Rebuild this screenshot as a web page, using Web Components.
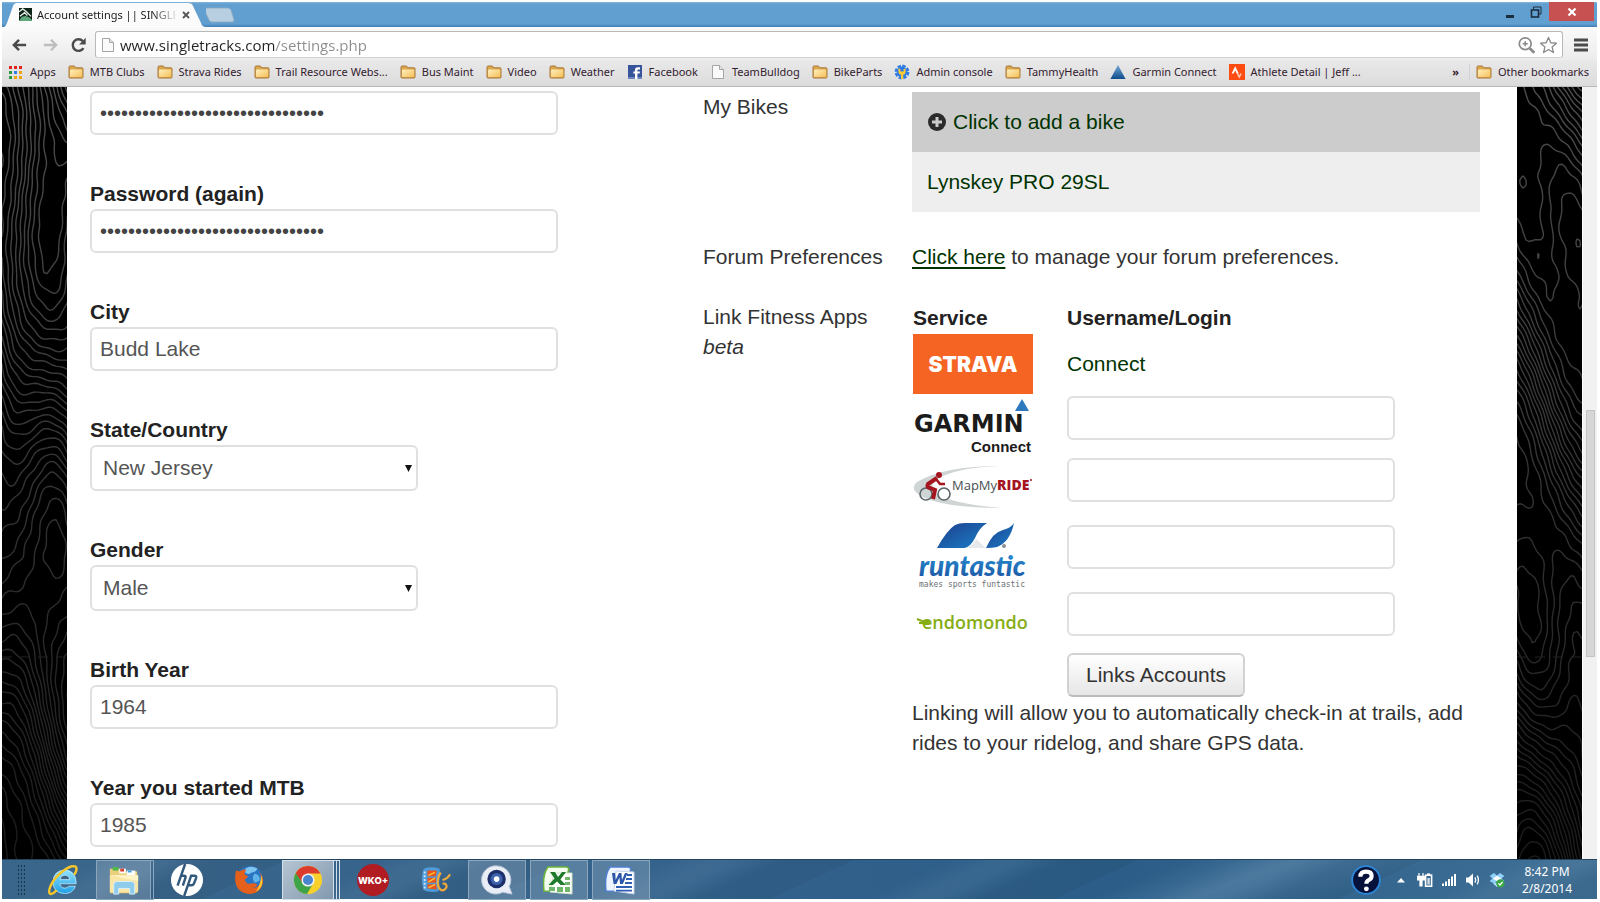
<!DOCTYPE html>
<html lang="en">
<head>
<meta charset="utf-8">
<title>Account settings || SINGLETRACKS</title>
<style>
    body {
        margin: 0;
        background: #fff;
        font-family: "Liberation Sans", Arial, sans-serif;
    }
</style>
</head>
<body>
<browser-window>
    <tab-strip slot="chrome" label="Account settings || SINGLE"></tab-strip>
    <address-bar slot="chrome" url="www.singletracks.com/settings.php"></address-bar>
    <bookmark-bar slot="chrome">
        <bookmark-item icon="apps">Apps</bookmark-item>
        <bookmark-item icon="folder">MTB Clubs</bookmark-item>
        <bookmark-item icon="folder">Strava Rides</bookmark-item>
        <bookmark-item icon="folder">Trail Resource Webs...</bookmark-item>
        <bookmark-item icon="folder">Bus Maint</bookmark-item>
        <bookmark-item icon="folder">Video</bookmark-item>
        <bookmark-item icon="folder">Weather</bookmark-item>
        <bookmark-item icon="facebook">Facebook</bookmark-item>
        <bookmark-item icon="page">TeamBulldog</bookmark-item>
        <bookmark-item icon="folder">BikeParts</bookmark-item>
        <bookmark-item icon="admin">Admin console</bookmark-item>
        <bookmark-item icon="folder">TammyHealth</bookmark-item>
        <bookmark-item icon="triangle">Garmin Connect</bookmark-item>
        <bookmark-item icon="strava">Athlete Detail | Jeff ...</bookmark-item>
        <bookmark-item slot="other" icon="folder">Other bookmarks</bookmark-item>
    </bookmark-bar>

    <settings-page>
        <form-field label="Password" type="password" value="aaaaaaaaaaaaaaaaaaaaaaaaaaaaaaaa" no-label></form-field>
        <form-field label="Password (again)" type="password" value="aaaaaaaaaaaaaaaaaaaaaaaaaaaaaaaa"></form-field>
        <form-field label="City" value="Budd Lake"></form-field>
        <select-field label="State/Country" value="New Jersey"></select-field>
        <select-field label="Gender" value="Male"></select-field>
        <form-field label="Birth Year" value="1964"></form-field>
        <form-field label="Year you started MTB" value="1985"></form-field>

        <setting-row slot="right">
            <span slot="name">My Bikes</span>
            <bike-list></bike-list>
        </setting-row>
        <setting-row slot="right">
            <span slot="name">Forum Preferences</span>
            <forum-link></forum-link>
        </setting-row>
        <setting-row slot="right">
            <span slot="name">Link Fitness Apps <em>beta</em></span>
            <fitness-apps></fitness-apps>
        </setting-row>
    </settings-page>

    <task-bar slot="taskbar">
        <task-item icon="ie" name="Internet Explorer"></task-item>
        <task-item icon="explorer" name="File Explorer" state="open" stack="1"></task-item>
        <task-item icon="hp" name="HP"></task-item>
        <task-item icon="firefox" name="Firefox"></task-item>
        <task-item icon="chrome" name="Chrome" state="active" stack="2"></task-item>
        <task-item icon="wko" name="WKO+"></task-item>
        <task-item icon="movie" name="Movies"></task-item>
        <task-item icon="quick" name="Q" state="open"></task-item>
        <task-item icon="excel" name="Excel" state="open"></task-item>
        <task-item icon="word" name="Word" state="open"></task-item>
    </task-bar>
</browser-window>

<script>
const UI_FONT = '"Noto Sans", "Open Sans", sans-serif';

// all icons: [viewBox, markup]
const ICONS = {
    apps: ['0 0 16 16', `
        <g fill="#e2231a"><rect x="1" y="2" width="3" height="3"/><rect x="6" y="2" width="3" height="3"/><rect x="11" y="2" width="3" height="3"/></g>
        <rect x="1" y="7" width="3" height="3" fill="#2c9a3f"/><rect x="6" y="7" width="3" height="3" fill="#2f7de1"/><rect x="11" y="7" width="3" height="3" fill="#f0a30a"/>
        <rect x="1" y="12" width="3" height="3" fill="#2c9a3f"/><rect x="6" y="12" width="3" height="3" fill="#f0a30a"/><rect x="11" y="12" width="3" height="3" fill="#f0a30a"/>`],
    folder: ['0 0 16 16', `
        <defs><linearGradient id="f" x1="0" y1="0" x2="1" y2="1"><stop offset="0" stop-color="#ffefc0"/><stop offset="1" stop-color="#f5c057"/></linearGradient></defs>
        <path d="M1 13V3.2Q1 2 2.2 2H6.4L7.8 3.8H14Q15 3.8 15 4.8V13Q15 14 14 14H2Q1 14 1 13Z" fill="#dba74c" stroke="#a9763b"/>
        <path d="M2 13V6.2Q2 5.4 2.8 5.4H13.4Q14.2 5.4 14.2 6.2V13Z" fill="url(#f)"/>`],
    facebook: ['0 0 16 16', `
        <rect x="1" y="1" width="14" height="14" fill="#37539a"/><rect x="1" y="13" width="14" height="2" fill="#6c86bd"/>
        <path d="M8 15V9.6H6.3V7.5H8V6Q8 3.2 10.8 3.2H13V5.4H11.4Q10.4 5.4 10.4 6.3V7.5H13L12.6 9.6H10.4V15Z" fill="#fff"/>`],
    page: ['0 0 16 16', `
        <path d="M2.5 1.5H9.5L13.5 5.5V14.5H2.5Z" fill="#fafafa" stroke="#a5a5a5"/><path d="M9.5 1.5V5.5H13.5" fill="#e6e6e6" stroke="#a5a5a5"/>`],
    admin: ['0 0 16 16', `
        <circle cx="8" cy="8" r="5.4" fill="#2e7be4"/><circle cx="8" cy="8" r="6.2" fill="none" stroke="#2e7be4" stroke-width="2.4" stroke-dasharray="3.4 1.4"/>
        <path d="M4.4 4.4V8Q4.6 10.4 7 10.8V15H9.2V10.8Q11.4 10.4 11.6 8V4.4L9.6 5V7.6H6.4V5Z" fill="#ffc933"/>`],
    triangle: ['0 0 16 16', `
        <defs><linearGradient id="t" x1="0" y1="0" x2="0" y2="1"><stop offset="0" stop-color="#74a6d4"/><stop offset="1" stop-color="#0d4c8c"/></linearGradient></defs>
        <path d="M8 1L15.6 15H.4Z" fill="url(#t)"/>`],
    strava: ['0 0 16 16', `
        <rect width="16" height="16" fill="#fc4c12"/><path d="M2.6 9.4L6.2 2.2L9.8 9.4H7.7L6.2 6.5L4.7 9.4Z" fill="#fff"/>
        <path d="M7.6 9.6H9.3L10.2 11.4L11.2 9.6H12.9L10.2 14.8Z" fill="#ffc9b2"/>`],
    favicon: ['0 0 14 14', `
        <rect width="14" height="14" fill="#10251a"/><path d="M0 14L3 9.5L7 8.5L11 10L14 13V14Z" fill="#5fa77c"/>
        <path d="M0 4L4 1L8 4L13 9M1 9L6 5L9 8" stroke="#e7eee9" stroke-width="1.4" fill="none"/>`],
    back: ['0 0 18 16', `<path d="M16 8H3.5M8.5 2.5L3 8L8.5 13.5" fill="none" stroke="#4b4b4b" stroke-width="2.6"/>`],
    forward: ['0 0 18 16', `<path d="M2 8H14.5M9.5 2.5L15 8L9.5 13.5" fill="none" stroke="#bdbdbd" stroke-width="2.4"/>`],
    reload: ['0 0 16 16', `<path d="M13 11.2A5.8 5.8 0 1 1 12.4 4.2" fill="none" stroke="#4b4b4b" stroke-width="2.4"/><path d="M15.2 .8V7.4H8.6Z" fill="#4b4b4b"/>`],
    zoomglass: ['0 0 16 16', `
        <circle cx="6.8" cy="6.8" r="5.6" fill="none" stroke="#8a8a8a" stroke-width="1.6"/><path d="M11 11L15.4 15.4" stroke="#8a8a8a" stroke-width="2.6"/>
        <path d="M4.4 6.8H9.2M6.8 4.4V9.2" stroke="#8a8a8a" stroke-width="1.5"/>`],
    star: ['0 0 18 18', `<path d="M9 1L11.4 6.6L17.4 7.1L12.8 11L14.2 17L9 13.8L3.8 17L5.2 11L.6 7.1L6.6 6.6Z" fill="#fff" stroke="#8a8a8a" stroke-width="1.4" stroke-linejoin="round"/>`],
    menu: ['0 0 14 14', `<path d="M0 2H14M0 7H14M0 12H14" stroke="#4b4b4b" stroke-width="3"/>`],
    plus: ['0 0 18 18', `<circle cx="9" cy="9" r="9" fill="#2b2b2b"/><path d="M9 4V14M4 9H14" stroke="#ccc" stroke-width="3"/>`],

    ie: ['0 0 34 34', `
        <defs><linearGradient id="i" x1="0" y1="0" x2="0" y2="1"><stop offset="0" stop-color="#8fe3ff"/><stop offset="1" stop-color="#1f9fe6"/></linearGradient></defs>
        <path d="M31 21H13.8Q14.4 25.6 18.8 25.6Q22 25.6 23.2 23.6H30.2Q27.4 31.4 18.8 31.4Q6.6 31 6.4 19Q6.8 7 19 6.4Q31.2 7 31 21ZM14 16.6H24Q23.6 12 19 11.9Q14.8 12 14 16.6Z" fill="url(#i)" stroke="#d8f5ff" stroke-width=".7"/>
        <path d="M9.5 28.5C3 35 .2 31.4 4.2 22.4C9.6 12 23.4 .4 30 2.6C32.4 3.6 31.2 8 29.6 10.4" fill="none" stroke="#f6c62d" stroke-width="2.6" stroke-linecap="round"/>`],
    explorer: ['0 0 34 34', `
        <path d="M2 5H12L14 8H31V31H2Z" fill="#eccf7c"/><rect x="5" y="3" width="6" height="4" fill="#4fb84a"/><path d="M12 5H19V10H12Z" fill="#fff"/><path d="M13 5H17V8H13Z" fill="#d9402e"/>
        <path d="M20 7H29V12H20Z" fill="#fff"/><path d="M21 7H25V9H21Z" fill="#3f9ee0"/><path d="M2 12H32V30H2Z" fill="#f9e6a4"/><path d="M2 12L32 12L32 18Z" fill="#fff3c8"/>
        <path d="M6 32V22Q6 18.6 9.6 18.6H25Q28.4 18.6 28.4 22V32H23V26H11.4V32Z" fill="#8fcbea" stroke="#d7f0fb"/>`],
    hp: ['0 0 34 34', `
        <circle cx="17" cy="17" r="17" fill="#fff"/>
        <g fill="none" stroke="#31597c" stroke-width="2.6"><path d="M15 0L7 23M10.4 12.4H13.8Q16 12.4 15.4 14.6L12.6 23"/><path d="M14 34L21.4 12.4H24.8Q27.4 12.4 26.6 15L24.6 20.4Q23.8 22.6 21.6 22.6H18.2"/></g>`],
    firefox: ['0 0 34 34', `
        <circle cx="18" cy="15.4" r="13.4" fill="#2a74c4"/><path d="M13 5Q19 1 26 5Q24 9 20 9Q16 12 13 9Z" fill="#7dc4ef"/><path d="M23 10Q30 12 28 18L23 20Q19 15 23 10Z" fill="#5fb1e8"/>
        <path d="M3.4 6.4Q5 8.4 7.4 7.6Q10.6 5 14 6Q11.4 9 12.8 11.6Q16 12 16.2 13.6L12.6 16.6Q13.4 22 19 20.8Q23.6 19.6 25.8 22Q24 25.6 19.4 25.6Q29 26 30 16Q30.2 10.6 27.6 7.6Q33.4 13.6 31.4 21.6Q28 32 17.4 31.8Q3.6 30.6 2.4 17.4Q2 11.4 3.4 6.4Z" fill="#e4601b"/>
        <path d="M30 12Q34 24 24.4 29.4Q29.4 22 30 12Z" fill="#fbc934"/>`],
    chrome: ['0 0 34 34', `
        <circle cx="17" cy="17" r="15" fill="#f8d02c"/><path d="M17 17L4 9.5A15 15 0 0 0 16 32L22.6 20.4Z" fill="#3fa34a"/>
        <path d="M17 10H30.2A15 15 0 0 0 4 9.5L11 20Z" fill="#dd3b2b"/><circle cx="17" cy="17" r="7" fill="#f2f2f2"/><circle cx="17" cy="17" r="5.4" fill="#4a86d0"/>`],
    wko: ['0 0 34 34', `<circle cx="17" cy="17" r="17" fill="#b01c22"/><text x="17" y="21" text-anchor="middle" font-family="Inter, sans-serif" font-weight="800" font-size="10" fill="#fff">WKO+</text>`],
    movie: ['0 0 34 34', `
        <path d="M5 5Q13 2 22 5L21 29Q12 31 5 28Q1 16 5 5Z" fill="#4e9bdb"/><path d="M6 8V26" stroke="#cfe8fa" stroke-width="2" stroke-dasharray="2 2"/>
        <path d="M9 7H19L18 13H9ZM9 14.6H18V20H9ZM9 21.6H18L19 27L9 26Z" fill="#e8541a"/><path d="M10 12L17 9M10 19L17 15M10 25L17 22" stroke="#ffc23a" stroke-width="1.4"/>
        <path d="M23 9Q18 16 21 25Q25 31 29 25Q30 20 25 21M25 17Q30 16 33 11" fill="none" stroke="#f0a93a" stroke-width="2.4"/>`],
    quick: ['0 0 34 34', `
        <path d="M17 2A15 15 0 0 1 30 24L33 32L23 30A15 15 0 1 1 17 2Z" fill="#e9edf5" stroke="#b9c4d8"/><circle cx="16.6" cy="16" r="9.8" fill="#1c2f6b"/><circle cx="16.6" cy="16" r="6.4" fill="#3d63ad"/><circle cx="16.6" cy="16" r="3" fill="#fff"/>`],
    excel: ['3 1 32 32', `
        <path d="M4 28Q2 12 8 4H26Q30 4 28 9L27 29Z" fill="#f5fff0" stroke="#69b53c" stroke-width="1.6"/><path d="M14 10H32V31L10 29Z" fill="#fff" stroke="#cfe3c4"/>
        <path d="M10 9H15L18 14L22 9H26L20.4 16.4L26 22H20.6L17 18.6L13 22H8.4L14.6 15.6Z" fill="#1f7a2c"/>
        <g fill="#6fb66a"><path d="M25 14H30V17H25ZM25 19H30V22H25ZM9 24H15V28H9ZM17 24H23V29H17ZM25 24H30V29H25Z"/></g>`],
    word: ['3 1 32 32', `
        <path d="M4 28Q2 12 8 4H26Q30 4 28 9L27 29Z" fill="#eef4ff" stroke="#4f7fd0" stroke-width="1.6"/><path d="M14 8L32 9V31L12 28Z" fill="#fff" stroke="#c6d3ea"/>
        <path d="M10 10H13L13.6 17L17 10H19.4L20 17L23 10H25.6L20.8 21H18L17.4 14.6L14.4 21H11.6Z" fill="#2a55a8"/>
        <path d="M25 12H30M24 16H30M23 20H30M14 24H30M14 27.6H30" stroke="#2f5fb4" stroke-width="1.8"/>`],
    help: ['0 0 32 32', `
        <circle cx="16" cy="16" r="14.8" fill="#07123c" stroke="#2d86d8" stroke-width="2"/>
        <path d="M10 12.4Q10 7 16 7Q22 7 22 11.6Q22 14.4 19 16Q16.4 17.4 16.4 20" fill="none" stroke="#fff" stroke-width="4.4"/><circle cx="16.4" cy="25.4" r="2.6" fill="#fff"/>`],
    up: ['0 0 16 16', `<path d="M4 10.5L8 6L12 10.5Z" fill="#fff"/>`],
    plug: ['0 0 18 16', `
        <path d="M3 1V4M7 1V4M1.6 4.4H8.4V8H6V14H4V8H1.6Z" stroke="#fff" stroke-width="1.2" fill="#fff"/><rect x="9.6" y="3.2" width="6" height="11" fill="none" stroke="#fff" stroke-width="1.6"/><path d="M11 1.4H14.2V3H11Z" fill="#fff"/><rect x="11.4" y="6" width="2.4" height="6.6" fill="#d4dee7"/>`],
    signal: ['0 0 16 16', `<path d="M1 11.6H3V14H1ZM4 9.6H6V14H4ZM7 7H9V14H7ZM10 4.6H12V14H10ZM13 2H15V14H13Z" fill="#fff"/>`],
    speaker: ['0 0 16 16', `<path d="M1 5.4H3.6L8 1.6V14.4L3.6 10.6H1Z" fill="#fff"/><path d="M10 5.4Q11.4 8 10 10.6M12.2 3.6Q14.6 8 12.2 12.4" fill="none" stroke="#fff" stroke-width="1.3"/>`],
    dropbox: ['0 0 16 16', `
        <path d="M5 1L8 3.4L11 1L15.4 4L12.4 6.4L15.4 9L11 11.4L8 9.2L5 11.4L.6 9L3.6 6.4L.6 4Z" fill="#8fd0fa"/><path d="M3.6 6.4L8 3.8L12.4 6.4L8 9Z" fill="#fff"/><path d="M4 11.4L8 10.4L11 12.6L8 15Z" fill="#b5e0fb"/>
        <circle cx="11.4" cy="11.4" r="4.2" fill="#39a844"/><path d="M9.4 11.4L11 13L13.6 9.8" fill="none" stroke="#fff" stroke-width="1.3"/>`]
};

class AppIcon extends HTMLElement {
    constructor() {
        super();
        this.attachShadow({ mode: 'open' });
    }

    connectedCallback() {
        const [box, art] = ICONS[this.getAttribute('name')];
        this.shadowRoot.innerHTML = `
            <style>
                :host { display: inline-block; flex: none; width: 16px; height: 16px; }
                svg { display: block; width: 100%; height: 100%; }
            </style>
            <svg viewBox="${box}" aria-hidden="true">${art}</svg>
        `;
    }
}

class BrowserWindow extends HTMLElement {
    constructor() {
        super();
        this.attachShadow({ mode: 'open' });
        this.shadowRoot.innerHTML = `
            <style>
                :host {
                    box-sizing: border-box;
                    display: flex;
                    flex-direction: column;
                    height: 100vh;
                    padding: 2px 3px 3px 2px;
                    overflow: hidden;
                }
                .view { flex: 1; min-height: 0; overflow: hidden; display: flex; }
                .view ::slotted(*) { flex: 1; }
            </style>
            <slot name="chrome"></slot>
            <div class="view"><slot></slot></div>
            <slot name="taskbar"></slot>
        `;
    }
}

class TabStrip extends HTMLElement {
    constructor() {
        super();
        this.attachShadow({ mode: 'open' });
    }

    connectedCallback() {
        this.shadowRoot.innerHTML = `
            <style>
                :host {
                    display: flex;
                    flex: none;
                    height: 25px;
                    box-sizing: border-box;
                    background: linear-gradient(#84b6de, #629fd1 2px, #629fd1 22px, #3f7db2);
                    font: 11px/22px ${UI_FONT};
                    color: #1b1b1b;
                }
                .tab { position: relative; width: 204px; height: 25px; }
                .shape { position: absolute; inset: 0; width: 100%; height: 100%; }
                .row { position: relative; display: flex; align-items: center; height: 25px; padding-left: 17px; gap: 5px; }
                .row app-icon { width: 13px; height: 13px; }
                .title {
                    width: 138px;
                    white-space: nowrap;
                    -webkit-mask-image: linear-gradient(90deg, #000 115px, transparent 142px);
                    mask-image: linear-gradient(90deg, #000 115px, transparent 142px);
                }
                button { border: 0; padding: 0; background: none; display: flex; align-items: center; justify-content: center; }
                .x svg { width: 8px; height: 8px; }
                .x { width: 12px; }
                .new { width: 32px; height: 25px; }
                .controls { display: flex; align-items: flex-start; margin: 0 3px 0 auto; }
                .controls button { width: 26px; height: 19px; }
                .controls .close { width: 45px; background: #c75050; }
            </style>
            <div class="tab">
                <svg class="shape" viewBox="0 0 204 25"><path d="M0 25H2Q4 24 5 21L11 4Q12 1 15 1H186Q190 1 191 4L199 21Q200 25 204 25Z" fill="#fbfbfb"/></svg>
                <div class="row">
                    <app-icon name="favicon"></app-icon>
                    <span class="title">${this.getAttribute('label')}</span>
                    <button class="x" aria-label="Close tab"><svg viewBox="0 0 8 8"><path d="M1 1L7 7M7 1L1 7" stroke="#555" stroke-width="1.8"/></svg></button>
                </div>
            </div>
            <button class="new" aria-label="New tab"><svg width="32" height="25" viewBox="2 0 32 25"><path d="M1 6H24Q26 6 27 8L30 18Q30 20 28 20H8Q6 20 5 18L0 7Q0 6 1 6Z" fill="#b7cfe1" stroke="#8da9be" stroke-width=".8"/></svg></button>
            <div class="controls">
                <button aria-label="Minimize"><svg width="12" height="12"><path d="M2 10.5H10" stroke="#1c2c3a" stroke-width="3"/></svg></button>
                <button aria-label="Restore"><svg width="12" height="12" fill="none" stroke="#1c2c3a"><path d="M3.5 3V1H11V8H9"/><rect x="1.5" y="4" width="7" height="7" stroke-width="1.6"/></svg></button>
                <button class="close" aria-label="Close"><svg width="10" height="10"><path d="M1.5 1.5L8.5 8.5M8.5 1.5L1.5 8.5" stroke="#fff" stroke-width="2.2"/></svg></button>
            </div>
        `;
    }
}

class AddressBar extends HTMLElement {
    constructor() {
        super();
        this.attachShadow({ mode: 'open' });
    }

    connectedCallback() {
        this.shadowRoot.innerHTML = `
            <style>
                :host {
                    display: flex;
                    flex: none;
                    align-items: center;
                    height: 31px;
                    padding-top: 2px;
                    background: linear-gradient(#fafafa, #ececec);
                }
                button { border: 0; padding: 0; background: none; display: flex; justify-content: center; width: 28px; }
                button app-icon { width: 17px; height: 16px; }
                .back { width: 34px; }
                .box {
                    flex: 1;
                    display: flex;
                    align-items: center;
                    box-sizing: border-box;
                    height: 27px;
                    margin: 0 2px 0 3px;
                    padding: 0 3px 0 4px;
                    border: 1px solid #b9b9b9;
                    border-bottom-color: #d0d0d0;
                    border-radius: 3px;
                    background: #fff;
                }
                /* host part dark, path part grey */
                input {
                    flex: 1;
                    min-width: 0;
                    height: 24px;
                    border: 0;
                    padding: 0 0 0 4px;
                    outline: 0;
                    font: 15px/24px "Open Sans", sans-serif;
                    background: linear-gradient(90deg, #222 159px, #8c8c8c 159px);
                    -webkit-background-clip: text;
                    background-clip: text;
                    -webkit-text-fill-color: transparent;
                }
                .box button { width: 22px; }
                .box app-icon { height: 18px; }
                .menu { width: 32px; }
                .menu app-icon { width: 14px; height: 14px; }
            </style>
            <button class="back" aria-label="Back"><app-icon name="back"></app-icon></button>
            <button aria-label="Forward"><app-icon name="forward"></app-icon></button>
            <button aria-label="Reload"><app-icon name="reload"></app-icon></button>
            <div class="box">
                <app-icon name="page"></app-icon>
                <input type="text" aria-label="Address" value="${this.getAttribute('url')}">
                <button aria-label="Zoom"><app-icon name="zoomglass"></app-icon></button>
                <button aria-label="Bookmark"><app-icon name="star"></app-icon></button>
            </div>
            <button class="menu" aria-label="Menu"><app-icon name="menu"></app-icon></button>
        `;
    }
}

class BookmarkBar extends HTMLElement {
    constructor() {
        super();
        this.attachShadow({ mode: 'open' });
        this.shadowRoot.innerHTML = `
            <style>
                :host {
                    display: flex;
                    flex: none;
                    align-items: center;
                    box-sizing: border-box;
                    height: 27px;
                    padding: 0 8px 2px 6px;
                    background: linear-gradient(#e9e9e9, #dcdcdc);
                    border-bottom: 1px solid #b8b8b8;
                    font: 11px/16px ${UI_FONT};
                    color: #33202f;
                }
                nav { display: flex; gap: 12px; }
                .more { margin-left: auto; margin-right: 10px; border: 0; padding: 0; background: none; font: inherit; font-weight: bold; color: inherit; }
                .other { border-left: 1px solid #cfd3da; padding-left: 6px; }
            </style>
            <nav><slot></slot></nav>
            <button class="more" aria-label="More bookmarks">»</button>
            <div class="other"><slot name="other"></slot></div>
        `;
    }
}

class BookmarkItem extends HTMLElement {
    constructor() {
        super();
        this.attachShadow({ mode: 'open' });
    }

    connectedCallback() {
        this.shadowRoot.innerHTML = `
            <style>
                :host { display: block; white-space: nowrap; }
                a { display: flex; align-items: center; gap: 6px; color: inherit; text-decoration: none; }
            </style>
            <a href="#"><app-icon name="${this.getAttribute('icon')}"></app-icon><slot></slot></a>
        `;
    }
}

// contour lines for the page backdrop
class TopoStrip extends HTMLElement {
    constructor() {
        super();
        this.attachShadow({ mode: 'open' });
    }

    height(x, y) {
        const s = Number(this.getAttribute('seed'));
        return y * 0.05 - x * 0.09
            + 2.2 * Math.sin(x * 0.045 + y * 0.011 + s)
            + 3.2 * Math.sin(y * 0.017 - x * 0.028 + s * 2)
            + 1.1 * Math.sin(x * 0.075 - y * 0.015 + s * 3)
            + 1.6 * Math.cos(y * 0.007 + x * 0.05)
            + 0.12 * Math.sin(x * 0.28 + y * 0.1)
            + 0.12 * Math.sin(y * 0.19 - x * 0.15);
    }

    contours(w, h, step) {
        const cell = 3;
        let d = '';
        for (let y = 0; y < h; y += cell) {
            for (let x = 0; x < w; x += cell) {
                const pts = [[x, y], [x + cell, y], [x + cell, y + cell], [x, y + cell]];
                const v = pts.map(p => this.height(p[0], p[1]) / step);
                for (let l = Math.ceil(Math.min(...v)); l <= Math.max(...v); l++) {
                    const hit = [];
                    for (let i = 0; i < 4; i++) {
                        const j = (i + 1) % 4;
                        if ((v[i] < l) !== (v[j] < l)) {
                            const t = (l - v[i]) / (v[j] - v[i]);
                            hit.push((pts[i][0] + t * (pts[j][0] - pts[i][0])).toFixed(1) + ' ' + (pts[i][1] + t * (pts[j][1] - pts[i][1])).toFixed(1));
                        }
                    }
                    if (hit.length > 1) d += `M${hit[0]}L${hit[1]}`;
                }
            }
        }
        return d;
    }

    connectedCallback() {
        this.shadowRoot.innerHTML = `
            <style>
                :host { display: block; flex: none; width: 65px; background: #000; overflow: hidden; }
                svg { display: block; }
            </style>
            <svg width="65" height="1200" viewBox="0 0 65 1200" fill="none">
                <defs><linearGradient id="fade" gradientUnits="userSpaceOnUse" x1="0" y1="0" x2="0" y2="770">
                    <stop offset="0" stop-color="#4c4c4c"/><stop offset=".5" stop-color="#343434"/><stop offset="1" stop-color="#1b1b1b"/>
                </linearGradient></defs>
                <path d="${this.contours(66, 1200, 1)}" stroke="url(#fade)" stroke-width="1.4" stroke-linecap="round"/>
                <path d="M0 570H65" stroke="#222" stroke-dasharray="10 8"/>
            </svg>
        `;
    }
}

class SettingsPage extends HTMLElement {
    constructor() {
        super();
        this.attachShadow({ mode: 'open' });
        this.shadowRoot.innerHTML = `
            <style>
                :host { display: flex; min-width: 0; font-size: 21px; line-height: 30px; color: #333; background: #fff; }
                .page {
                    flex: 1;
                    display: grid;
                    grid-template-columns: minmax(0, 468fr) minmax(0, 777fr);
                    column-gap: 145px;
                    align-items: start;
                    padding: 4px 37px 0 23px;
                    background: #fff;
                }
                .left { display: flex; flex-direction: column; gap: 44px; }
                .right { display: flex; flex-direction: column; gap: 30px; padding-top: 1px; }
                .scroll { flex: none; box-sizing: border-box; width: 15px; padding: 323px 2px 0 3px; background: #f1f1f1; border-left: 1px solid #fff; }
                .thumb { height: 245px; border: 1px solid #c3c3c3; background: #d6d6d6; }
            </style>
            <topo-strip seed="1"></topo-strip>
            <div class="page">
                <div class="left"><slot></slot></div>
                <div class="right"><slot name="right"></slot></div>
            </div>
            <topo-strip seed="4"></topo-strip>
            <div class="scroll"><div class="thumb"></div></div>
        `;
    }
}

const BOX_CSS = `
    box-sizing: border-box;
    border: 2px solid #e0e0e0;
    border-radius: 6px;
    background: #fff;
    color: #555;
    font: 21px/30px "Liberation Sans", Arial, sans-serif;
`;

class FormField extends HTMLElement {
    constructor() {
        super();
        this.attachShadow({ mode: 'open' });
    }

    connectedCallback() {
        const label = this.getAttribute('label');
        const bare = this.hasAttribute('no-label');
        this.shadowRoot.innerHTML = `
            <style>
                :host { display: block; }
                label { display: block; font-weight: bold; color: #222; }
                input { ${BOX_CSS} display: block; width: 100%; height: 44px; padding: 0 8px; }
                input[type=password] { font-size: 20px; color: #444; }
            </style>
            ${bare ? '' : `<label for="box">${label}</label>`}
            <input id="box" type="${this.getAttribute('type') || 'text'}" value="${this.getAttribute('value')}" ${bare ? `aria-label="${label}"` : ''}>
        `;
    }
}

class SelectField extends HTMLElement {
    constructor() {
        super();
        this.attachShadow({ mode: 'open' });
    }

    connectedCallback() {
        this.shadowRoot.innerHTML = `
            <style>
                :host { display: block; }
                label { display: block; font-weight: bold; color: #222; }
                .wrap { display: grid; width: 70%; align-items: center; }
                select { ${BOX_CSS} grid-area: 1 / 1; width: 100%; height: 46px; padding: 0 24px 0 11px; appearance: none; -webkit-appearance: none; }
                svg { grid-area: 1 / 1; justify-self: end; margin-right: 6px; width: 7px; height: 7px; pointer-events: none; z-index: 1; }
            </style>
            <label for="box">${this.getAttribute('label')}</label>
            <div class="wrap">
                <select id="box"><option>${this.getAttribute('value')}</option></select>
                <svg viewBox="0 0 7 7"><path d="M0 0H7L3.5 7Z" fill="#111"/></svg>
            </div>
        `;
    }
}

class SettingRow extends HTMLElement {
    constructor() {
        super();
        this.attachShadow({ mode: 'open' });
        this.shadowRoot.innerHTML = `
            <style>
                :host { display: grid; grid-template-columns: 180px minmax(0, 1fr); column-gap: 29px; }
            </style>
            <div><slot name="name"></slot></div>
            <div><slot></slot></div>
        `;
    }
}

class BikeList extends HTMLElement {
    constructor() {
        super();
        this.attachShadow({ mode: 'open' });
        this.shadowRoot.innerHTML = `
            <style>
                :host { display: block; }
                a { display: flex; align-items: center; gap: 7px; padding: 15px; background: #eee; color: #030; text-decoration: none; }
                a.add { padding: 15px 16px; background: #ccc; }
                app-icon { width: 18px; height: 18px; }
            </style>
            <a class="add" href="#"><app-icon name="plus"></app-icon>Click to add a bike</a>
            <a href="#">Lynskey PRO 29SL</a>
        `;
    }
}

class ForumLink extends HTMLElement {
    constructor() {
        super();
        this.attachShadow({ mode: 'open' });
        this.shadowRoot.innerHTML = `
            <style>
                :host { display: block; }
                a { color: #030; text-underline-offset: 3px; text-decoration-thickness: 2px; }
            </style>
            <a href="#">Click here</a> to manage your forum preferences.
        `;
    }
}

const LOGOS = {
    strava: `<svg viewBox="0 0 120 60" width="120" height="60">
        <rect width="120" height="60" fill="#f56423"/>
        <text x="60" y="38" text-anchor="middle" font-family="Inter, sans-serif" font-weight="900" font-size="21" fill="#fff">STRAVA</text></svg>`,
    garmin: `<svg viewBox="0 0 120 60" width="120" height="60">
        <path d="M109 3L116 15H102Z" fill="#2d79bd"/>
        <text x="1" y="36" font-family="DejaVu Sans, sans-serif" font-weight="700" font-size="24" fill="#1b1b1b">GARMIN</text>
        <text x="118" y="56" text-anchor="end" font-family="Liberation Sans, sans-serif" font-weight="700" font-size="15" fill="#1b1b1b">Connect</text></svg>`,
    mapmyride: `<svg viewBox="0 0 120 60" width="120" height="60">
        <path d="M88 8Q30 8 4 24Q-4 31 8 38Q30 50 90 50Q40 46 24 36Q12 27 30 18Q50 9 88 8Z" fill="#cfd4d4"/>
        <g fill="none" stroke="#5b6468" stroke-width="1.6"><circle cx="13" cy="36" r="6"/><circle cx="31" cy="36" r="6" fill="#fff"/></g>
        <circle cx="26" cy="17" r="3" fill="#a5151f"/><path d="M24 20L15 26Q13 29 17 30L22 32L20 41" fill="none" stroke="#a5151f" stroke-width="4"/><path d="M23 21L27 26L32 26" fill="none" stroke="#a5151f" stroke-width="2.6"/>
        <text x="39" y="32" font-family="Open Sans, sans-serif" font-size="13" fill="#4b5154">MapMy<tspan font-weight="800" font-size="14" fill="#a5151f">RIDE</tspan></text>
        <circle cx="118" cy="22" r="1" fill="#a5151f"/></svg>`,
    runtastic: `<svg viewBox="0 0 120 70" width="120" height="70">
        <defs><linearGradient id="b" x1="0" y1="0" x2="1" y2="1"><stop offset="0" stop-color="#1e3f8c"/><stop offset="1" stop-color="#1a7fc8"/></linearGradient>
        <linearGradient id="r" x1="0" y1="0" x2="0" y2="1"><stop offset="0" stop-color="#2a9bdc"/><stop offset="1" stop-color="#1b4f9e"/></linearGradient></defs>
        <path d="M24 28Q34 10 42 5Q46 3 52 3H74Q66 8 62 18Q58 26 52 28Z" fill="url(#b)"/><path d="M52 28Q60 26 63 19L73 28Z" fill="#e6e9ec"/>
        <path d="M73 28Q80 12 90 10Q98 8 101 3Q97 22 84 27Q80 28 73 28Z" fill="url(#b)"/><circle cx="91" cy="26" r="2" fill="#8a8f93"/>
        <text x="6" y="56" font-family="Lato, sans-serif" font-weight="900" font-style="italic" font-size="28" fill="url(#r)">runtastic</text>
        <text x="6" y="67" font-family="DejaVu Sans Mono, monospace" font-size="8" fill="#6b7175">makes sports funtastic</text></svg>`,
    endomondo: `<svg viewBox="0 0 120 60" width="120" height="60">
        <text x="9" y="37" font-family="Open Sans, sans-serif" font-weight="600" font-size="18" fill="#86ad14">endomondo</text>
        <path d="M4 27L9 29M6 31L10 31" stroke="#86ad14" stroke-width="2"/><path d="M8 29Q12 26 17 29L16 33H10Z" fill="#86ad14"/></svg>`
};

class FitnessApps extends HTMLElement {
    constructor() {
        super();
        this.attachShadow({ mode: 'open' });
        const row = (name, tall) => `
            <tr class="${tall ? 'tall' : ''}"><td>${LOGOS[name]}</td>
            <td><input type="text" aria-label="${name} username"></td></tr>`;
        this.shadowRoot.innerHTML = `
            <style>
                :host { display: block; }
                table { width: 100%; border-collapse: collapse; table-layout: fixed; margin-top: 1px; }
                col.logo { width: 155px; }
                th, td { padding: 0; text-align: left; vertical-align: middle; }
                th { color: #222; height: 30px; }
                th:first-child, td:first-child { padding-left: 1px; }
                td { height: 62px; }
                .tall td { height: 72px; }
                svg { display: block; }
                a { color: #030; text-decoration: none; }
                input { ${BOX_CSS} display: block; width: 328px; max-width: 100%; height: 44px; margin-bottom: 16px; padding: 0 8px; }
                button {
                    display: block;
                    height: 44px;
                    padding: 0 17px;
                    border: 2px solid #d2d2d2;
                    border-bottom-color: #bbb;
                    border-radius: 6px;
                    background: linear-gradient(#fff, #e6e6e6);
                    color: #333;
                    font: inherit;
                }
                .last td { height: 45px; vertical-align: top; }
                p { margin: 0; }
            </style>
            <table>
                <colgroup><col class="logo"><col></colgroup>
                <tr><th>Service</th><th>Username/Login</th></tr>
                <tr><td>${LOGOS.strava}</td><td><a href="#">Connect</a></td></tr>
                ${row('garmin')}${row('mapmyride')}${row('runtastic', true)}${row('endomondo')}
                <tr class="last"><td></td><td><button type="button">Links Accounts</button></td></tr>
            </table>
            <p>Linking will allow you to automatically check-in at trails, add rides to your ridelog, and share GPS data.</p>
        `;
    }
}

class TaskItem extends HTMLElement {
    constructor() {
        super();
        this.attachShadow({ mode: 'open' });
    }

    connectedCallback() {
        const stack = Number(this.getAttribute('stack') || 0);
        this.shadowRoot.innerHTML = `
            <style>
                :host { display: flex; width: 58px; height: 40px; box-sizing: border-box; }
                button { flex: 1; display: flex; align-items: center; justify-content: center; padding: 0; border: 1px solid transparent; background: none; }
                i { width: 3px; border: 1px solid #8ba6bd; border-left: 0; box-sizing: border-box; }
                :host([state=open]) button { background: #ffffff2e; border-color: #8ba6bd; }
                :host([state=active]) button { background: linear-gradient(135deg, #b5c4d2, #8299af); border-color: #d5dfe8; }
                :host([state=active]) i { border-color: #d5dfe8; }
                app-icon { width: 32px; height: 32px; }
            </style>
            <button aria-label="${this.getAttribute('name')}"><app-icon name="${this.getAttribute('icon')}"></app-icon></button>
            ${'<i></i>'.repeat(stack)}
        `;
    }
}

class TaskBar extends HTMLElement {
    constructor() {
        super();
        this.attachShadow({ mode: 'open' });
        const tray = ['up', 'plug', 'signal', 'speaker', 'dropbox'];
        this.shadowRoot.innerHTML = `
            <style>
                :host {
                    display: flex;
                    flex: none;
                    align-items: center;
                    height: 40px;
                    border-top: 1px solid #234560;
                    box-sizing: border-box;
                    padding: 0 12px 0 15px;
                    background:
                        linear-gradient(160deg, transparent 70%, #6d97b855 76%, transparent 84%),
                        repeating-linear-gradient(155deg, #ffffff00 0 40px, #ffffff0c 60px 70px, #0000000d 90px 120px),
                        linear-gradient(90deg, #3a668b, #33628c 45%, #2b5d88 70%, #3f6f95);
                }
                .grip { width: 10px; height: 32px; margin-right: 7px; background: radial-gradient(circle, #16344d 1px, transparent 1px) 0 0 / 3px 4px; }
                .items { display: flex; gap: 4px; }
                .tray { display: flex; align-items: center; margin-left: auto; }
                .tray app-icon { width: 18px; height: 16px; margin: 0 3px; }
                .tray app-icon.help { width: 30px; height: 30px; margin: 0 8px; }
                .clock { width: 76px; text-align: center; font: 12px/17px ${UI_FONT}; color: #fff; }
            </style>
            <div class="grip"></div>
            <div class="items"><slot></slot></div>
            <div class="tray">
                <app-icon class="help" name="help"></app-icon>
                ${tray.map(n => `<app-icon name="${n}"></app-icon>`).join('')}
                <div class="clock">8:42 PM<br>2/8/2014</div>
            </div>
        `;
    }
}

customElements.define('app-icon', AppIcon);
customElements.define('browser-window', BrowserWindow);
customElements.define('tab-strip', TabStrip);
customElements.define('address-bar', AddressBar);
customElements.define('bookmark-bar', BookmarkBar);
customElements.define('bookmark-item', BookmarkItem);
customElements.define('topo-strip', TopoStrip);
customElements.define('settings-page', SettingsPage);
customElements.define('form-field', FormField);
customElements.define('select-field', SelectField);
customElements.define('setting-row', SettingRow);
customElements.define('bike-list', BikeList);
customElements.define('forum-link', ForumLink);
customElements.define('fitness-apps', FitnessApps);
customElements.define('task-item', TaskItem);
customElements.define('task-bar', TaskBar);
</script>
</body>
</html>
